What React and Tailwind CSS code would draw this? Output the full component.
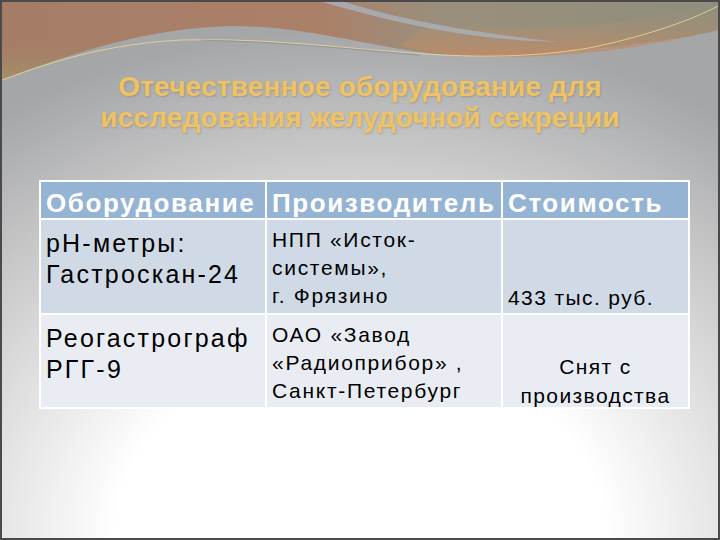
import React from 'react';

function TopWave() {
  return (
    <svg
      className="absolute left-0 top-0 h-[110px] w-full"
      viewBox="0 0 720 110"
      preserveAspectRatio="none"
    >
      <defs>
        <linearGradient id="band" x1="0" y1="0" x2="1" y2="0">
          <stop offset="0" stopColor="#a57d67" />
          <stop offset="0.45" stopColor="#ab8069" />
          <stop offset="0.6" stopColor="#9a8f7c" />
          <stop offset="1" stopColor="#8f8e7c" />
        </linearGradient>
        <linearGradient id="orange" x1="0" y1="0" x2="0" y2="1">
          <stop offset="0" stopColor="#a3937d" stopOpacity="0" />
          <stop offset="1" stopColor="#c58a62" />
        </linearGradient>
        <linearGradient id="leftTint" x1="0" y1="0" x2="0" y2="1">
          <stop offset="0" stopColor="#a57d67" stopOpacity="0" />
          <stop offset="1" stopColor="#a3a06a" />
        </linearGradient>
      </defs>
      {/* coloured band above the grey body */}
      <path
        d="M0 0 H720 V28 C690 36 640 42 600 46 C540 54 480 58 420 50 C350 40 300 24 230 24 C150 26 70 50 0 78 Z"
        fill="url(#band)"
      />
      <path d="M0 40 C40 40 90 36 140 34 C90 48 40 62 0 78 Z" fill="url(#leftTint)" opacity="0.6" />
      {/* orange band on the right */}
      <path
        d="M430 22 C520 30 620 28 720 0 V28 C650 46 560 58 470 54 C440 52 420 48 400 44 Z"
        fill="url(#orange)"
        opacity="0.8"
      />
      {/* light grey swoosh */}
      <path
        d="M322 0 H345 C390 14 450 28 560 40 C470 38 400 22 322 0 Z"
        fill="#a8adb2"
        opacity="0.9"
      />
      {/* thin yellow line */}
      <path
        d="M0 78 C60 56 110 42 180 38 C260 36 320 44 400 50 C470 56 530 56 590 46 C640 36 690 20 720 4"
        fill="none"
        stroke="#e8d79a"
        strokeWidth="1"
        opacity="0.85"
      />
      <path
        d="M200 38 C280 40 340 46 420 53"
        fill="none"
        stroke="#7b7c80"
        strokeWidth="1"
        opacity="0.5"
      />
    </svg>
  );
}

const rows = [
  {
    equipment: ['рН-метры:', 'Гастроскан-24'],
    maker: ['НПП «Исток-', 'системы»,', 'г. Фрязино'],
    cost: ['433 тыс. руб.'],
    costCls: 'text-left mb-[1px]',
    bg: 'bg-[#d0dae6]',
    h: 'h-[95px]',
  },
  {
    equipment: ['Реогастрограф', 'РГГ-9'],
    maker: ['ОАО «Завод', '«Радиоприбор» ,', 'Санкт-Петербург'],
    cost: ['Снят с', 'производства'],
    costCls: 'text-center -mb-[3px]',
    bg: 'bg-[#e9edf3]',
    h: 'h-[94px]',
  },
];

export default function App() {
  return (
    <div
      className="relative h-[540px] w-[720px] overflow-hidden border-2 border-[#4a4a4a] bg-[radial-gradient(ellipse_90%_95%_at_50%_100%,#ffffff_38%,#dcdcdc_62%,#a5a6a8_100%)]"
      style={{ fontFamily: '"Liberation Sans", Arial, sans-serif' }}
    >
      <TopWave />
      <div className="relative flex flex-col items-center pt-[69px]">
        <h1 className="text-center text-[28px] font-bold leading-[31px] tracking-[0.2px] text-[#efc262] [text-shadow:1px_1px_2px_rgba(120,100,60,0.35)]">
          Отечественное оборудование для
          <br />
          исследования желудочной секреции
        </h1>
      </div>

      <div className="relative ml-[37px] mt-[47px] w-[649px]">
        <table className="w-full table-fixed border-collapse">
          <colgroup>
            <col className="w-[226px]" />
            <col className="w-[236px]" />
            <col className="w-[187px]" />
          </colgroup>
          <thead>
            <tr className="h-[38px] bg-[#95b3d3] text-[26px] font-bold leading-[30px] tracking-[1.6px] text-white">
              <th className="border-2 border-white px-[5px] pt-[5px] text-left font-bold">Оборудование</th>
              <th className="border-2 border-white px-[5px] pt-[5px] text-left font-bold">Производитель</th>
              <th className="border-2 border-white px-[5px] pt-[5px] text-left font-bold">Стоимость</th>
            </tr>
          </thead>
          <tbody>
            {rows.map((r, i) => (
              <tr key={i} className={`${r.bg} ${r.h}`}>
                <td className="border-2 border-white px-[5px] pt-[8px] align-top text-[25px] leading-[31px] tracking-[2.2px] text-black">
                  {r.equipment.map((t) => (
                    <div key={t}>{t}</div>
                  ))}
                </td>
                <td className="border-2 border-white px-[5px] pt-[6px] align-top text-[21px] leading-[28px] tracking-[1.7px] text-black">
                  {r.maker.map((t) => (
                    <div key={t}>{t}</div>
                  ))}
                </td>
                <td className="border-2 border-white px-[5px] pb-0 align-bottom text-[21px] leading-[29px] tracking-[1.4px] text-black">
                  <div className={r.costCls}>
                    {r.cost.map((t) => (
                      <div key={t}>{t}</div>
                    ))}
                  </div>
                </td>
              </tr>
            ))}
          </tbody>
        </table>
      </div>
    </div>
  );
}
